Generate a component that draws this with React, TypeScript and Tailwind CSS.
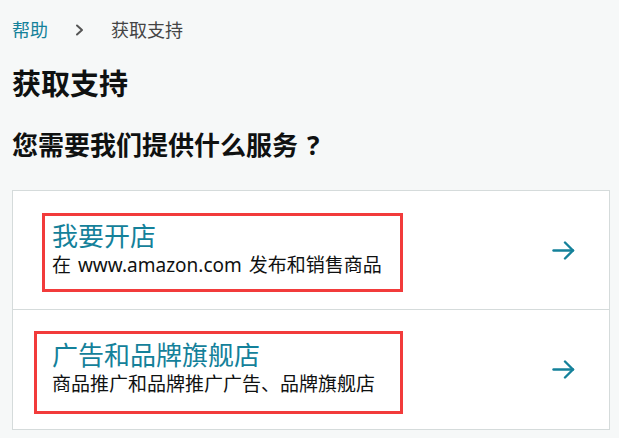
const font = { fontFamily: '"Noto Sans", "Noto Sans CJK SC", sans-serif' };

type Item = {
    title: string;
    desc: string;
    row: string;
    box: string;
};

const items: Item[] = [
    { title: "我要开店", desc: "在 www.amazon.com 发布和销售商品", row: "pl-[29px] border-b border-[#d5dbdb]", box: "w-[361px] pl-[7px] pt-[5px] pb-[11px]" },
    { title: "广告和品牌旗舰店", desc: "商品推广和品牌推广广告、品牌旗舰店", row: "pl-[21px]", box: "w-[369px] pl-[15px] pt-[6px] pb-[14px]" },
];

function Arrow() {
    return (
        <svg width="23" height="19" viewBox="0 0 23 19" fill="none" stroke="#14819a" strokeWidth="2.4" strokeLinecap="round" strokeLinejoin="round">
            <path d="M1.5 9.5H21" />
            <path d="M13 1.5L21 9.5L13 17.5" />
        </svg>
    );
}

export default function App() {
    return (
        <div className="min-h-screen bg-[#f6f8f8] px-3 pt-4" style={font}>
            {/* breadcrumb */}
            <div className="flex items-center text-[18px] leading-[28px]">
                <span className="text-[#14819a]">帮助</span>
                <svg className="ml-[27px] mr-[27px]" width="9" height="12" viewBox="0 0 9 12" fill="none" stroke="#555" strokeWidth="2" strokeLinecap="round" strokeLinejoin="round">
                    <path d="M2 1.5L7 6L2 10.5" />
                </svg>
                <span className="text-[#444]">获取支持</span>
            </div>

            <h1 className="mt-[22px] text-[29px] leading-[36px] font-bold text-[#0f1111]">获取支持</h1>
            <h2 className="mt-[25px] text-[26px] leading-[36px] font-bold text-[#0f1111]">
                您需要我们提供什么服务<span className="ml-[9px]">?</span>
            </h2>

            <div className="mt-[27px] w-[598px] border border-[#d5dbdb] bg-white">
                {items.map((item, index) => (
                    <div key={index} className={"flex h-[119px] items-center justify-between pr-[34px] " + item.row}>
                        <div className={"mt-[5px] border-[3px] border-[#f23b3b] " + item.box}>
                            <div className="text-[26px] leading-[31px] text-[#14819a]">{item.title}</div>
                            <div className="text-[19px] leading-[26px] text-[#0f1111] [word-spacing:2px]">{item.desc}</div>
                        </div>
                        <Arrow />
                    </div>
                ))}
            </div>
        </div>
    );
}
